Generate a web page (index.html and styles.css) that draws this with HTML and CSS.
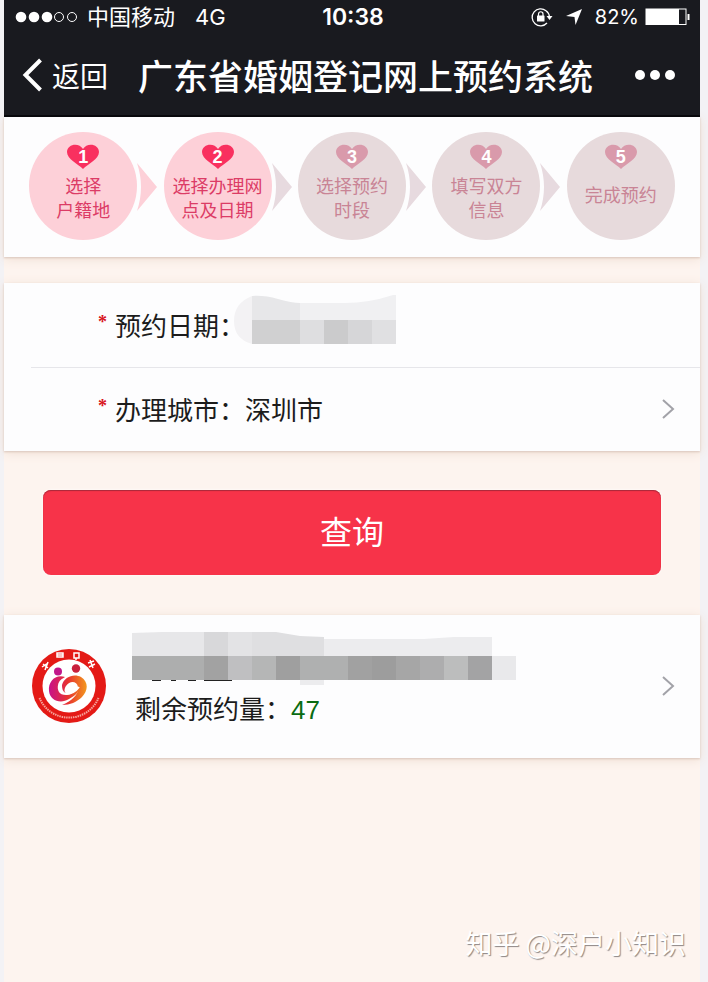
FILE: index.html
```
<!DOCTYPE html>
<html lang="zh-CN">
<head>
    <meta charset="UTF-8" />
    <meta name="viewport" content="width=device-width, initial-scale=1.0" />
    <title>广东省婚姻登记网上预约系统</title>
    <link rel="stylesheet" href="styles.css">
</head>
<body>
    <header>
        <div class="status-bar">
            <div class="status-left">
                <svg class="signal" width="62" height="12" viewBox="0 0 62 12">
                    <g fill="#fff">
                        <circle cx="6" cy="6" r="5.300" />
                        <circle cx="19" cy="6" r="5.300" />
                        <circle cx="32" cy="6" r="5.300" />
                    </g>
                    <g fill="none" stroke="#fff">
                        <circle cx="44" cy="6" r="4.5" />
                        <circle cx="57" cy="6" r="4.5" />
                    </g>
                </svg>
                <span>中国移动</span>
                <span class="network">4G</span>
            </div>
            <span class="clock">10:38</span>
            <div class="status-right">
                <svg width="22" height="20" viewBox="0 0 22 20">
                    <path d="M15 3.700A8.500 8.500 0 1 0 16 16M15 3.700A8.500 8.500 0 0 1 18.500 10" fill="none" stroke="#fff" stroke-width="1.3" />
                    <path d="M15.5 9h6l-3 4z" fill="#fff" />
                    <rect x="6" y="8.500" width="7.500" height="6" rx="0.5" fill="#fff" />
                    <path d="M7.500 9V7a2.200 2.200 0 0 1 4.500 0v2" fill="none" stroke="#fff" stroke-width="1.2" />
                </svg>
                <svg class="location" width="18" height="18" viewBox="0 0 18 18">
                    <path d="M17 1L10.500 17 9.500 9 1 8z" fill="#fff" />
                </svg>
                <span class="percent">82%</span>
                <svg width="46" height="18" viewBox="0 0 46 18">
                    <rect x="1" y="1" width="40" height="15.500" fill="none" stroke="#fff" />
                    <rect x="1" y="1" width="33" height="15.500" fill="#fff" />
                    <path d="M42.500 6h2v6h-2z" fill="#fff" />
                </svg>
            </div>
        </div>
        <nav class="title-bar">
            <a class="back" href="#">
                <svg width="22" height="34" viewBox="0 0 22 34">
                    <path d="M18.500 2L3.500 17l15 15" fill="none" stroke="#fff" stroke-width="4" />
                </svg>
                返回
            </a>
            <h1>广东省婚姻登记网上预约系统</h1>
            <button class="more" type="button" aria-label="更多">
                <svg width="42" height="12" viewBox="0 0 42 12" fill="#fff">
                    <circle cx="6" cy="6" r="5" />
                    <circle cx="21" cy="6" r="5" />
                    <circle cx="36" cy="6" r="5" />
                </svg>
            </button>
        </nav>
    </header>

    <main>
        <ol class="steps panel">
            <li class="step done">
                <div class="circle">
                    <span class="heart">
                        <svg width="34" height="26" viewBox="0 0 34 26"><path d="M17 25C12 20 1 15 1 8 1 0 13-2 17 5c4-7 16-5 16 3 0 7-11 12-16 17z" /></svg>
                        <b>1</b>
                    </span>
                    <p>选择<br>户籍地</p>
                </div>
                <svg class="arrow" width="20" height="48" viewBox="0 0 20 48"><path d="M0 0l20 24L0 48q8-24 0-48z" /></svg>
            </li>
            <li class="step done current">
                <div class="circle">
                    <span class="heart">
                        <svg width="34" height="26" viewBox="0 0 34 26"><path d="M17 25C12 20 1 15 1 8 1 0 13-2 17 5c4-7 16-5 16 3 0 7-11 12-16 17z" /></svg>
                        <b>2</b>
                    </span>
                    <p>选择办理网<br>点及日期</p>
                </div>
                <svg class="arrow" width="20" height="48" viewBox="0 0 20 48"><path d="M0 0l20 24L0 48q8-24 0-48z" /></svg>
            </li>
            <li class="step">
                <div class="circle">
                    <span class="heart">
                        <svg width="34" height="26" viewBox="0 0 34 26"><path d="M17 25C12 20 1 15 1 8 1 0 13-2 17 5c4-7 16-5 16 3 0 7-11 12-16 17z" /></svg>
                        <b>3</b>
                    </span>
                    <p>选择预约<br>时段</p>
                </div>
                <svg class="arrow" width="20" height="48" viewBox="0 0 20 48"><path d="M0 0l20 24L0 48q8-24 0-48z" /></svg>
            </li>
            <li class="step">
                <div class="circle">
                    <span class="heart">
                        <svg width="34" height="26" viewBox="0 0 34 26"><path d="M17 25C12 20 1 15 1 8 1 0 13-2 17 5c4-7 16-5 16 3 0 7-11 12-16 17z" /></svg>
                        <b>4</b>
                    </span>
                    <p>填写双方<br>信息</p>
                </div>
                <svg class="arrow" width="20" height="48" viewBox="0 0 20 48"><path d="M0 0l20 24L0 48q8-24 0-48z" /></svg>
            </li>
            <li class="step">
                <div class="circle">
                    <span class="heart">
                        <svg width="34" height="26" viewBox="0 0 34 26"><path d="M17 25C12 20 1 15 1 8 1 0 13-2 17 5c4-7 16-5 16 3 0 7-11 12-16 17z" /></svg>
                        <b>5</b>
                    </span>
                    <p class="single">完成预约</p>
                </div>
            </li>
        </ol>

        <form>
            <div class="fields panel">
                <div class="field">
                    <span class="label"><i>*</i>预约日期：</span>
                    <!-- hidden date -->
                    <svg class="date-mask" width="162" height="50" viewBox="0 0 162 50">
                        <path d="M18 1Q0 8 0 26t18 23z" fill="#f3f2f4" />
                        <path d="M18 1Q30 0 44 4t22 4v18H18z" fill="#e7e7e9" />
                        <path d="M66 8h45q25 0 51-9v27H66z" fill="#f0f0f2" />
                        <path d="M18 25h48v24H18z" fill="#d0d0d1" />
                        <path d="M66 25h24v24H66z" fill="#dedee0" />
                        <path d="M90 25h24v24H90z" fill="#cbcbcc" />
                        <path d="M114 25h24v24h-24z" fill="#d6d6d8" />
                        <path d="M138 25h24v24h-24z" fill="#e0e0e2" />
                    </svg>
                </div>
                <div class="field">
                    <label class="label" for="city"><i>*</i>办理城市：</label>
                    <select id="city">
                        <option>深圳市</option>
                    </select>
                    <svg class="chevron" width="14" height="22" viewBox="0 0 14 22"><path d="M2 2l10 9-10 9" /></svg>
                </div>
            </div>
            <button class="query" type="button">查询</button>
        </form>

        <a class="office panel" href="#">
            <svg class="logo" width="76" height="76" viewBox="0 0 76 76">
                <defs>
                    <linearGradient id="swirl" x1="18" x2="56" y1="0" y2="0" gradientUnits="userSpaceOnUse">
                        <stop offset="0" stop-color="#c8128a" />
                        <stop offset="0.5" stop-color="#e8332f" />
                        <stop offset="1" stop-color="#f39a1e" />
                    </linearGradient>
                </defs>
                <circle cx="38" cy="38" r="37" fill="#e41a16" />
                <circle cx="38" cy="38" r="26.500" fill="#fff" />
                <path d="M8.500 50A32 32 0 0 0 67.500 50" fill="none" stroke="#f7a59c" stroke-width="2" stroke-dasharray="1.5 0.8" />
                <g fill="none" stroke="#fff" stroke-width="1.5">
                    <path d="M12 16l5 4m-6-1l6-4m-3 7l3-8" />
                    <path d="M26 5h6v4h-6zm0 2h6" />
                    <path d="M43 5h5v5h-5zm2 5v2" />
                    <path d="M57 15l6-2m-5 6l6-3m-5-4l3 8" />
                </g>
                <circle cx="27" cy="23.500" r="4" fill="#c1178a" />
                <circle cx="45" cy="20.500" r="4.200" fill="#c9203c" />
                <path d="M34 29C24 26 17 34 18 43c1 10 12 13 20 8 6-3 10-7 10-11-4 3-8 7-13 7-7 0-9-5-8-10s4-6 7-8z" fill="url(#swirl)" />
                <path d="M31 37c2-8 12-12 19-8 8 5 7 14 1 20-5 5-12 8-20 8 9-4 17-10 16-18-1-6-8-7-12-1-2 3-2 6 0 7-3-1-4-4-4-8z" fill="url(#swirl)" />
                <path d="M35 46c5 0 10-3 13-7" fill="none" stroke="#fff" stroke-width="2" />
            </svg>
            <div class="office-info">
                <!-- hidden office name -->
                <svg width="384" height="56" viewBox="0 0 384 56">
                    <path d="M20 47h9v3h-9zM39 47h5v3h-5zM56 47h8v3h-8zM72 46h28v4H72z" fill="#222" />
                    <path d="M0 2l30-1h42v25H0z" fill="#e7e7e9" />
                    <path d="M72 1h24v25H72z" fill="#d8d8da" />
                    <path d="M96 1h24v25H96z" fill="#e3e3e5" />
                    <path d="M120 1h24l24 4 24 1v20h-72z" fill="#dfdfe1" />
                    <path d="M192 8h100l30-2h38v20H192z" fill="#ececee" />
                    <path d="M0 25h72v24H0z" fill="#adaeae" />
                    <path d="M72 25h24v24H72z" fill="#a2a2a2" />
                    <path d="M96 25h24v24H96z" fill="#bfbfc1" />
                    <path d="M120 25h24v24h-24z" fill="#b5b6b6" />
                    <path d="M144 25h24v24h-24z" fill="#9f9f9f" />
                    <path d="M168 25h48v24h-48z" fill="#afb0b0" />
                    <path d="M216 25h24v24h-24z" fill="#a1a1a1" />
                    <path d="M240 25h24v24h-24z" fill="#9d9d9d" />
                    <path d="M264 25h24v24h-24z" fill="#a6a6a6" />
                    <path d="M288 25h24v24h-24z" fill="#adadae" />
                    <path d="M312 25h24v24h-24z" fill="#bcbdbd" />
                    <path d="M336 25h24v24h-24z" fill="#a3a3a4" />
                    <path d="M360 25h24v24h-24z" fill="#e9e9eb" />
                    <path d="M168 49h24v5h-24z" fill="#ececee" />
                </svg>
                <p>剩余预约量：<strong>47</strong></p>
            </div>
            <svg class="chevron" width="14" height="22" viewBox="0 0 14 22"><path d="M2 2l10 9-10 9" /></svg>
        </a>
    </main>

    <div class="watermark">知乎 @深户小知识</div>
</body>
</html>
```
FILE: styles.css
```
/* Main Styles */
* {
    box-sizing: border-box;
}

body {
    margin: 0;
    padding: 0 8px 0 4px;
    min-height: 100vh;
    display: flex;
    flex-direction: column;
    position: relative;
    background-color: #f3f2f5;
    color: #1c1c1c;
    font-family: "Noto Sans CJK SC", sans-serif;
}

svg {
    display: block;
    flex: none;
}

a {
    color: inherit;
    text-decoration: none;
}

button {
    border: none;
    cursor: pointer;
    font-family: inherit;
}

/* Header Styles */
header {
    position: relative;
    z-index: 1;
    background-color: #191a1f;
    color: #fff;
    height: 117px;
    border-bottom: 2px solid #08080c;
}

.status-bar {
    display: grid;
    grid-template-columns: 1fr auto 1fr;
    align-items: center;
    height: 34px;
    padding: 0 9px 0 11px;
    font-family: Inter, "Noto Sans CJK SC", sans-serif;
    font-size: 22px;
    line-height: 34px;
}

.status-left,
.status-right {
    display: flex;
    align-items: center;
}

.status-right {
    justify-content: flex-end;
}

.signal {
    margin-right: 10px;
}

.network {
    margin-left: 20px;
}

.clock {
    font-size: 23px;
    font-weight: 600;
}

.location {
    margin: 0 12px;
}

.percent {
    margin-right: 6px;
    font-size: 20px;
}

.title-bar {
    display: flex;
    align-items: center;
    height: 82px;
    padding: 0 20px 0 18px;
}

.back {
    display: flex;
    align-items: center;
    gap: 8px;
    font-size: 28px;
}

h1 {
    margin: 0 auto 0 30px;
    font-size: 35px;
    font-weight: 500;
    line-height: 48px;
    white-space: nowrap;
}

.more {
    padding: 4px;
    background: none;
}

/* Panels on the cream background */
main {
    flex: 1;
    background-color: #fdf4ef;
}

.panel {
    background-color: #fdfdfe;
    box-shadow: 0 1px 2px #d9c6bc, 0 2px 10px #f0dfd4;
}

/* Steps */
.steps {
    display: grid;
    grid-template-columns: repeat(5, 1fr);
    margin: 0 0 26px;
    padding: 15px 12px 17px;
    list-style: none;
}

.step {
    position: relative;
    display: flex;
    justify-content: center;
    color: #c98495;
}

.circle {
    display: flex;
    flex-direction: column;
    align-items: center;
    width: 108px;
    height: 108px;
    padding-top: 12px;
    border-radius: 50%;
    background-color: #e7dadc;
}

.heart {
    position: relative;
}

.heart svg {
    fill: #d99aab;
}

.heart b {
    position: absolute;
    inset: 1px 0 0;
    color: #fff;
    font: bold 18px/24px "Liberation Sans", sans-serif;
    text-align: center;
}

.circle p {
    margin: 3px 0 0;
    font-size: 18px;
    line-height: 24px;
    text-align: center;
    white-space: nowrap;
}

.circle .single {
    margin-top: 12px;
}

.arrow {
    position: absolute;
    top: 31px;
    left: calc(50% + 54px);
    fill: #e7dadf;
}

.done {
    color: #dc3c66;
}

.done .circle {
    background-color: #fdd0d8;
}

.done .heart svg {
    fill: #f9305f;
}

.done .arrow {
    fill: #fdd0d8;
}

.current .arrow {
    fill: #e7dadf;
}

/* Form */
.field {
    display: flex;
    align-items: center;
    height: 84px;
    margin-left: 27px;
    padding: 0 25px 2px 0;
    font-size: 26px;
}

.field + .field {
    border-top: 1px solid #e6e6ea;
}

.label {
    display: flex;
    margin-left: 67px;
}

.label i {
    width: 17px;
    color: #d8121b;
    font: bold 18px/32px "Liberation Serif", serif;
}

.date-mask {
    margin-bottom: 8px;
    margin-left: -11px;
}

select {
    flex: 1;
    padding: 0;
    border: none;
    appearance: none;
    background: none;
    color: inherit;
    font: inherit;
}

.chevron {
    fill: none;
    stroke: #a2a2a8;
    stroke-width: 2;
}

.query {
    display: block;
    width: calc(100% - 78px);
    height: 85px;
    margin: 39px auto 40px;
    padding-bottom: 6px;
    border-radius: 8px;
    background-color: #f73349;
    box-shadow: inset 0 1px 1px #a8283a, 0 0 3px #fff;
    color: #fff;
    font-size: 32px;
}

/* Office row */
.office {
    display: flex;
    align-items: center;
    height: 143px;
    padding: 0 25px 2px 27px;
}

.office-info {
    flex: 1;
    margin-left: 25px;
    padding-bottom: 10px;
}

.office-info p {
    margin: 0 0 0 3px;
    font-size: 26px;
    line-height: 42px;
}

.office-info strong {
    color: #0a6b12;
    font-family: "Liberation Sans", sans-serif;
    font-weight: normal;
}

.watermark {
    position: absolute;
    right: 22px;
    bottom: 20px;
    color: #fff;
    font-size: 27px;
    line-height: 38px;
    text-shadow: 1px 1px 1px #8d8684;
}
```
